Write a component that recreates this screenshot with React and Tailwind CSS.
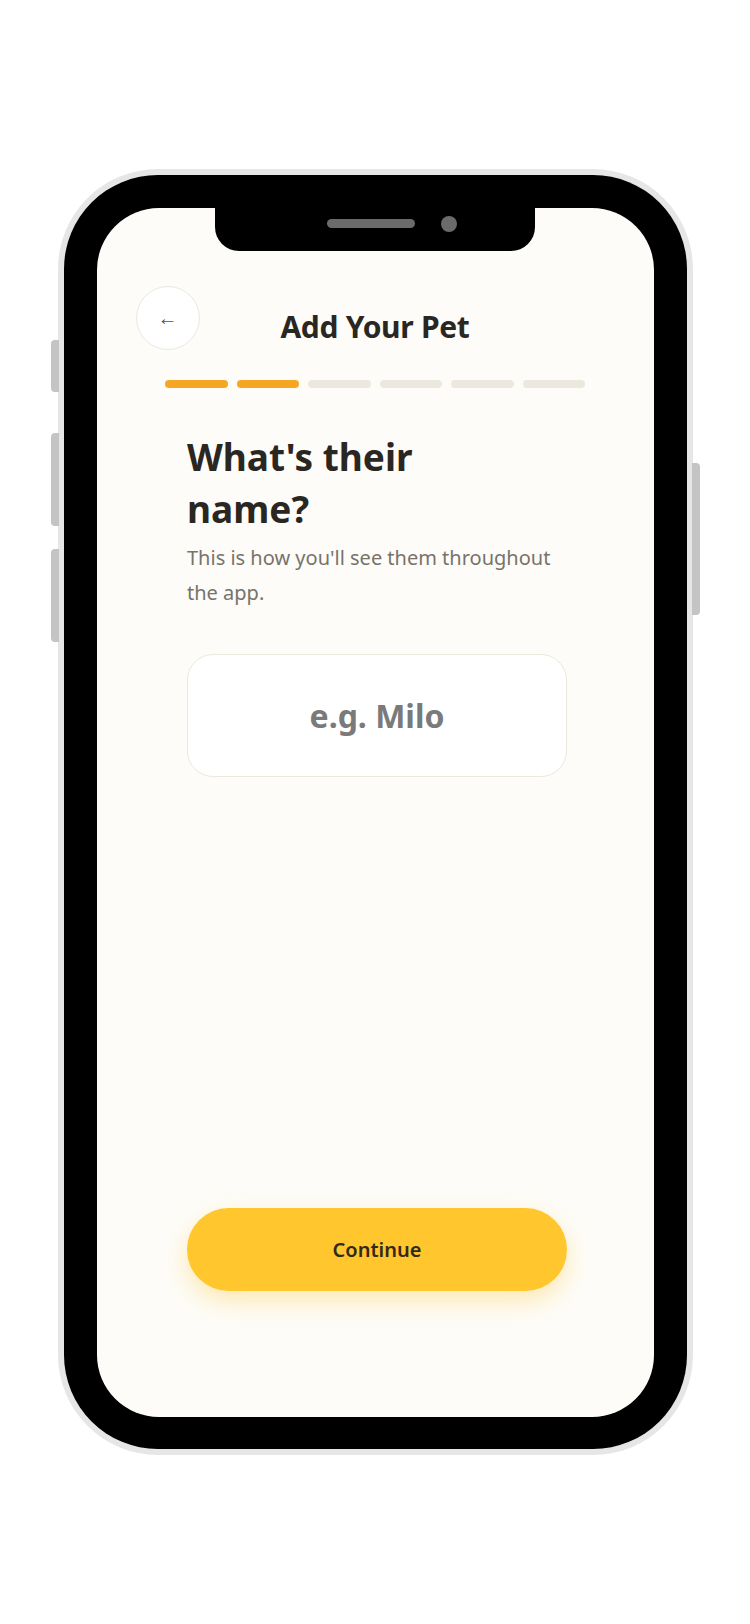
import React from 'react';

const steps = [true, true, false, false, false, false];

function SideButton({ className }) {
  return <div className={`absolute w-[8px] bg-[#c4c4c4] ${className}`} />;
}

export default function App() {
  return (
    <div className="min-h-[1624px] w-full bg-white flex justify-center pt-[169px] font-['Noto_Sans',sans-serif]">
      {/* phone */}
      <div className="relative h-[1286px] w-[635px]">
        <SideButton className="left-[-7px] top-[171px] h-[52px] rounded-l-[4px]" />
        <SideButton className="left-[-7px] top-[264px] h-[93px] rounded-l-[4px]" />
        <SideButton className="left-[-7px] top-[380px] h-[93px] rounded-l-[4px]" />
        <SideButton className="right-[-7px] top-[294px] h-[152px] rounded-r-[4px]" />

        <div className="h-full w-full rounded-[100px] bg-[#e6e6e6] p-[6px]">
          <div className="h-full w-full rounded-[94px] bg-black p-[33px] pb-[32px]">
            <div className="flex h-full w-full flex-col overflow-hidden rounded-[62px] bg-[#fdfcf8]">
              {/* notch */}
              <div className="mx-auto flex h-[43px] w-[320px] shrink-0 items-start justify-center gap-[26px] rounded-b-[24px] bg-black pl-[34px] pt-[8px]">
                <div className="mt-[3px] h-[9px] w-[88px] rounded-full bg-[#6b6b6b]" />
                <div className="h-[16px] w-[16px] rounded-full bg-[#6b6b6b]" />
              </div>

              {/* header */}
              <div className="relative mt-[35px] flex h-[64px] items-center justify-center px-[39px]">
                <button className="absolute left-[39px] top-0 flex h-[64px] w-[64px] items-center justify-center rounded-full border border-[#ebe8e0] bg-white text-[20px] text-[#555]">
                  ←
                </button>
                <h1 className="pt-[16px] text-[30px] font-bold tracking-[-0.3px] text-[#2a2722]">Add Your Pet</h1>
              </div>

              {/* progress */}
              <div className="mx-auto mt-[30px] flex w-[420px] gap-[9px]">
                {steps.map((done, i) => (
                  <div
                    key={i}
                    className={done ? 'h-[8px] flex-1 rounded-full bg-[#f5a623]' : 'h-[8px] flex-1 rounded-full bg-[#ece8de]'}
                  />
                ))}
              </div>

              {/* body */}
              <div className="mx-auto flex w-[380px] translate-x-[2px] flex-1 flex-col pb-[126px]">
                <h2 className="mt-[43px] max-w-[280px] text-[37px] font-bold leading-[52px] text-[#2a2722]">
                  What's their name?
                </h2>
                <p className="mt-[5px] text-[20px] leading-[35px] text-[#77736b]">
                  This is how you'll see them throughout
                  <br />
                  the app.
                </p>

                <input
                  placeholder="e.g. Milo"
                  className="mt-[44px] h-[123px] w-full rounded-[26px] border border-[#ece8de] bg-white text-center text-[32px] font-bold text-[#2a2722] outline-none placeholder:text-[#7a7a7a]"
                />

                <button className="mt-auto h-[83px] w-full rounded-full bg-[#ffc62e] text-[20px] font-semibold text-[#33291a] shadow-[0_10px_24px_rgba(255,198,46,0.35)]">
                  Continue
                </button>
              </div>
            </div>
          </div>
        </div>
      </div>
    </div>
  );
}
